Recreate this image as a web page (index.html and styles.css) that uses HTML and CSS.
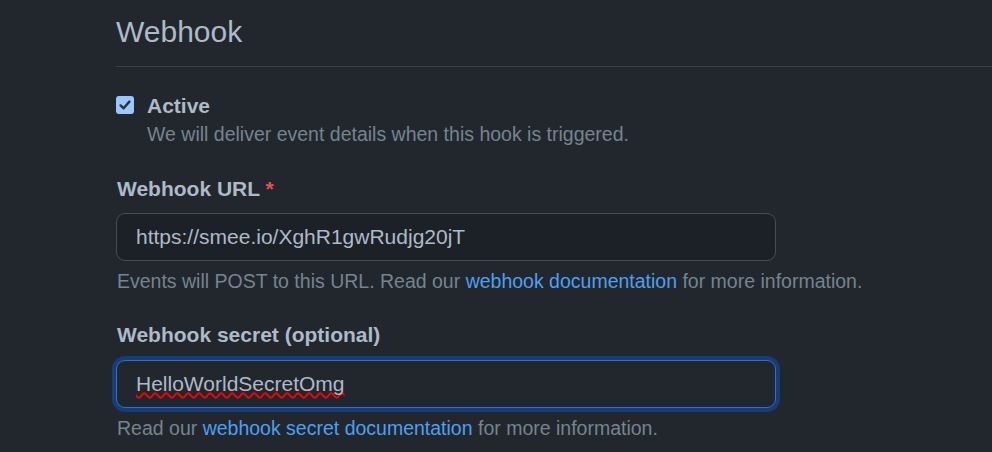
FILE: index.html
```html
<!DOCTYPE html>
<html lang="en">
<head>
<meta charset="utf-8">
<title>Webhook</title>
<link rel="stylesheet" href="styles.css">
</head>
<body>
<div class="page">
  <div class="subhead">
    <h2 class="subhead-heading">Webhook</h2>
  </div>

  <div class="check-row">
    <span class="checkbox" aria-hidden="true">
      <svg width="18" height="18" viewBox="0 0 18 18"><path d="M4.6 9.4 L7.6 12.3 L13.4 5.6" fill="none" stroke="#2f3033" stroke-width="2.4" stroke-linecap="round" stroke-linejoin="round"/></svg>
    </span>
    <div class="check-body">
      <div class="check-label">Active</div>
      <div class="note">We will deliver event details when this hook is triggered.</div>
    </div>
  </div>

  <div class="form-group first">
    <div class="label">Webhook URL <span class="required">*</span></div>
    <div class="input">https://smee.io/XghR1gwRudjg20jT</div>
    <div class="note">Events will POST to this URL. Read our <a class="link" href="#">webhook documentation</a> for more information.</div>
  </div>

  <div class="form-group">
    <div class="label">Webhook secret (optional)</div>
    <div class="input focused"><span class="misspelled">HelloWorldSecretOmg</span></div>
    <div class="note">Read our <a class="link" href="#">webhook secret documentation</a> for more information.</div>
  </div>
</div>
</body>
</html>
```

FILE: styles.css
```css
html, body {
  margin: 0;
  padding: 0;
  background: #22272e;
}

body {
  font-family: "Liberation Sans", Arial, sans-serif;
  color: #adbac7;
  overflow: hidden;
}

.page {
  padding-left: 116px;
}

.subhead {
  padding-top: 9px;
  padding-bottom: 12px;
  border-bottom: 1px solid #3a4149;
}

.subhead-heading {
  margin: 0;
  font-size: 30px;
  line-height: 45px;
  font-weight: 400;
  color: #adbac7;
}

.check-row {
  display: flex;
  margin-top: 24px;
}

.checkbox {
  width: 18px;
  height: 18px;
  margin-top: 5px;
  border-radius: 3px;
  background: #99c8ff;
  flex: none;
  display: flex;
}

.check-body {
  margin-left: 13px;
}

.check-label {
  font-size: 21px;
  line-height: 29px;
  font-weight: 700;
}

.note {
  font-size: 19.5px;
  line-height: 28px;
  color: #768390;
}

.form-group {
  margin-top: 25px;
  padding-left: 1px;
}

.form-group.first {
  margin-top: 26px;
}

.label {
  font-size: 21px;
  line-height: 30px;
  font-weight: 700;
}

.required {
  color: #e5534b;
}

.input {
  box-sizing: border-box;
  width: 660px;
  height: 48px;
  margin-left: -1px;
  margin-top: 9px;
  margin-bottom: 6px;
  padding: 0 19px;
  border: 1px solid #444c56;
  border-radius: 9px;
  background: #1c2128;
  font-size: 21px;
  line-height: 46px;
  color: #adbac7;
}

.input.focused {
  margin-top: 10px;
  background: #22272e;
  border-color: #316dca;
  box-shadow: 0 0 0 4px #143d79;
}

.misspelled {
  text-decoration: underline wavy #ff0000;
  text-decoration-thickness: 1.5px;
  text-underline-offset: 1px;
  text-decoration-skip-ink: none;
}

.link {
  color: #4ba0f2;
  text-decoration: none;
}
```
